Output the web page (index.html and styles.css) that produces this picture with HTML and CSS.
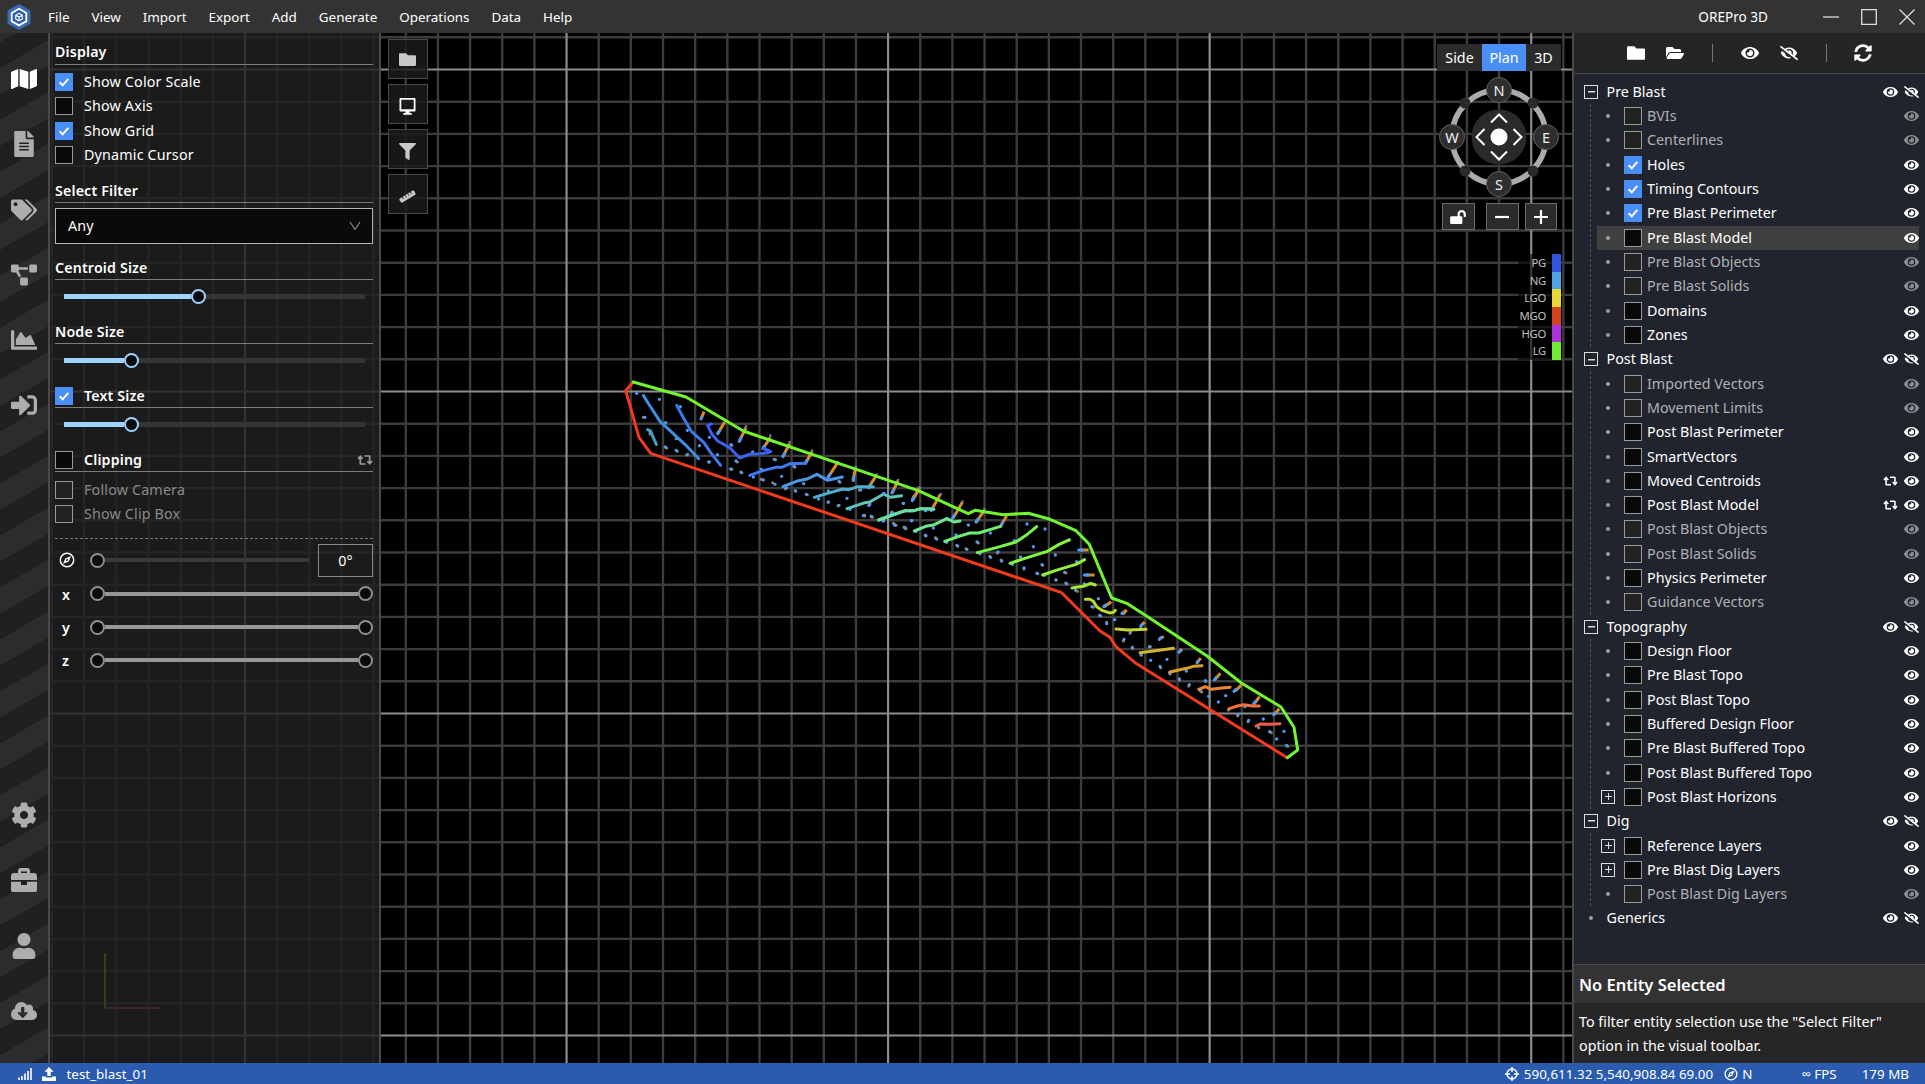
FILE: index.html
```html
<!DOCTYPE html>
<html lang="en">
<head>
<meta charset="utf-8">
<title>OREPro 3D</title>
<link rel="stylesheet" href="styles.css">
</head>
<body>
<svg class="defs" aria-hidden="true">
  <symbol id="eye" viewBox="0 0 576 512"><path d="M572.52 241.4C518.29 135.59 410.93 64 288 64S57.68 135.64 3.48 241.41a32.35 32.35 0 0 0 0 29.19C57.71 376.41 165.07 448 288 448s230.32-71.64 284.52-177.41a32.35 32.35 0 0 0 0-29.19zM288 400a144 144 0 1 1 144-144 143.93 143.93 0 0 1-144 144zm0-240a95.31 95.31 0 0 0-25.31 3.79 47.85 47.85 0 0 1-66.9 66.9A95.78 95.78 0 1 0 288 160z"/></symbol>
  <symbol id="eye-off" viewBox="0 0 640 512"><path d="M320 400c-75.85 0-137.25-58.71-142.9-133.11L72.2 185.82c-13.79 17.3-26.48 35.59-36.72 55.59a32.35 32.35 0 0 0 0 29.19C89.71 376.41 197.07 448 320 448c26.91 0 52.87-4 77.89-10.46L346 397.39a144.13 144.13 0 0 1-26 2.61zm313.82 58.1l-110.55-85.44a331.25 331.25 0 0 0 81.25-102.07 32.35 32.35 0 0 0 0-29.19C550.29 135.59 442.93 64 320 64a308.15 308.15 0 0 0-147.32 37.7L45.46 3.37A16 16 0 0 0 23 6.18L3.37 31.45A16 16 0 0 0 6.18 53.9l588.36 454.73a16 16 0 0 0 22.46-2.81l19.64-25.27a16 16 0 0 0-2.82-22.45zm-183.72-142l-39.3-30.38A94.75 94.75 0 0 0 416 256a94.76 94.76 0 0 0-121.31-92.21A47.65 47.65 0 0 1 304 192a46.64 46.64 0 0 1-1.54 10l-73.61-56.89A142.31 142.31 0 0 1 320 112a143.92 143.92 0 0 1 144 144c0 21.63-5.29 41.79-13.9 60.11z"/></symbol>
  <symbol id="folder" viewBox="0 0 512 512"><path d="M480 128H272l-64-64H32C14 64 0 78 0 96v320c0 18 14 32 32 32h448c18 0 32-14 32-32V160c0-18-14-32-32-32z"/></symbol>
  <symbol id="folder-open" viewBox="0 0 576 512"><path d="M572.694 292.093L500.27 416.248A63.997 63.997 0 0 1 444.989 448H45.025c-18.523 0-30.064-20.093-20.731-36.093l72.424-124.155A64 64 0 0 1 152 256h399.964c18.523 0 30.064 20.093 20.73 36.093zM152 224h328v-48c0-26.51-21.49-48-48-48H272l-64-64H48C21.49 64 0 85.49 0 112v278.046l69.077-118.418C86.214 242.25 117.989 224 152 224z"/></symbol>
  <symbol id="map" viewBox="0 0 576 512"><path d="M0 117.66v346.32c0 11.32 11.43 19.06 21.94 14.86L160 416V32L20.12 87.95A32.006 32.006 0 0 0 0 117.66zM192 416l192 64V96L192 32v384zM554.06 33.16L416 96v384l139.88-55.95A31.996 31.996 0 0 0 576 394.34V48.02c0-11.32-11.43-19.06-21.94-14.86z"/></symbol>
  <symbol id="file" viewBox="0 0 384 512"><path d="M224 136V0H24C10.7 0 0 10.7 0 24v464c0 13.3 10.7 24 24 24h336c13.3 0 24-10.7 24-24V160H248c-13.2 0-24-10.8-24-24zm64 236c0 6.6-5.4 12-12 12H108c-6.6 0-12-5.4-12-12v-8c0-6.6 5.4-12 12-12h168c6.6 0 12 5.4 12 12v8zm0-64c0 6.6-5.4 12-12 12H108c-6.6 0-12-5.4-12-12v-8c0-6.6 5.4-12 12-12h168c6.6 0 12 5.4 12 12v8zm0-72v8c0 6.6-5.4 12-12 12H108c-6.6 0-12-5.4-12-12v-8c0-6.6 5.4-12 12-12h168c6.6 0 12 5.4 12 12zm96-114.1v6.1H256V0h6.1c6.4 0 12.5 2.5 17 7l97.9 98c4.5 4.5 7 10.6 7 16.9z"/></symbol>
  <symbol id="tags" viewBox="0 0 640 512"><path d="M497.941 225.941L286.059 14.059A48 48 0 0 0 252.118 0H48C21.49 0 0 21.49 0 48v204.118a48 48 0 0 0 14.059 33.941l211.882 211.882c18.744 18.745 49.136 18.746 67.882 0l204.118-204.118c18.745-18.745 18.745-49.137 0-67.882zM112 160c-26.51 0-48-21.49-48-48s21.49-48 48-48 48 21.49 48 48-21.49 48-48 48zm513.941 133.823L421.823 497.941c-18.745 18.745-49.137 18.745-67.882 0l-.36-.36L527.64 323.522c16.999-16.999 26.36-39.6 26.36-63.64s-9.362-46.641-26.36-63.64L331.397 0h48.721a48 48 0 0 1 33.941 14.059l211.882 211.882c18.745 18.745 18.745 49.137 0 67.882z"/></symbol>
  <symbol id="diagram" viewBox="0 0 640 512"><path d="M384 320H256c-17.67 0-32 14.33-32 32v128c0 17.67 14.33 32 32 32h128c17.67 0 32-14.33 32-32V352c0-17.67-14.33-32-32-32zM192 32c0-17.67-14.33-32-32-32H32C14.33 0 0 14.33 0 32v128c0 17.67 14.33 32 32 32h95.72l73.16 128.04C211.98 300.98 232.4 288 256 288h.28L192 175.51V128h224V64H192V32zM608 0H480c-17.67 0-32 14.33-32 32v128c0 17.67 14.33 32 32 32h128c17.67 0 32-14.33 32-32V32c0-17.67-14.33-32-32-32z"/></symbol>
  <symbol id="chart" viewBox="0 0 512 512"><path d="M500 384c6.6 0 12 5.4 12 12v40c0 6.6-5.4 12-12 12H12c-6.6 0-12-5.4-12-12V76c0-6.6 5.4-12 12-12h40c6.6 0 12 5.4 12 12v308h436zM372.7 159.5L288 216l-85.3-113.7c-5.1-6.8-15.5-6.3-19.9 1L96 248v104h384l-89.9-187.8c-3.2-6.5-11.4-8.7-17.4-4.7z"/></symbol>
  <symbol id="sign-in" viewBox="0 0 512 512"><path d="M416 448h-84c-6.6 0-12-5.4-12-12v-40c0-6.6 5.4-12 12-12h84c17.7 0 32-14.3 32-32V160c0-17.7-14.3-32-32-32h-84c-6.6 0-12-5.4-12-12V76c0-6.6 5.4-12 12-12h84c53 0 96 43 96 96v192c0 53-43 96-96 96zm-47-201L201 79c-15-15-41-4.5-41 17v96H24c-13.3 0-24 10.7-24 24v96c0 13.3 10.7 24 24 24h136v96c0 21.5 26 32 41 17l168-168c9.3-9.4 9.3-24.6 0-34z"/></symbol>
  <symbol id="cog" viewBox="0 0 512 512"><path d="M487.4 315.7l-42.6-24.6c4.3-23.2 4.3-47 0-70.2l42.6-24.6c4.9-2.8 7.1-8.6 5.5-14-11.1-35.6-30-67.8-54.7-94.6-3.8-4.1-10-5.1-14.8-2.3L380.8 110c-17.9-15.4-38.5-27.3-60.8-35.1V25.8c0-5.6-3.9-10.5-9.4-11.7-36.7-8.2-74.3-7.8-109.2 0-5.5 1.2-9.4 6.1-9.4 11.7V75c-22.2 7.9-42.8 19.8-60.8 35.1L88.7 85.5c-4.9-2.8-11-1.9-14.8 2.3-24.7 26.7-43.6 58.9-54.7 94.6-1.7 5.4.6 11.2 5.5 14L67.3 221c-4.3 23.2-4.3 47 0 70.2l-42.6 24.6c-4.9 2.8-7.1 8.6-5.5 14 11.1 35.6 30 67.8 54.7 94.6 3.8 4.1 10 5.1 14.8 2.3l42.6-24.6c17.9 15.4 38.5 27.3 60.8 35.1v49.2c0 5.6 3.9 10.5 9.4 11.7 36.7 8.2 74.3 7.8 109.2 0 5.5-1.2 9.4-6.1 9.4-11.7v-49.2c22.2-7.9 42.8-19.8 60.8-35.1l42.6 24.6c4.9 2.8 11 1.9 14.8-2.3 24.7-26.7 43.6-58.9 54.7-94.6 1.5-5.5-.7-11.3-5.6-14.1zM256 336c-44.1 0-80-35.9-80-80s35.9-80 80-80 80 35.9 80 80-35.9 80-80 80z"/></symbol>
  <symbol id="toolbox" viewBox="0 0 26 24"><path fill-rule="evenodd" d="M7 5V3a3 3 0 0 1 3-3h6a3 3 0 0 1 3 3v2h4a3 3 0 0 1 3 3v4H0V8a3 3 0 0 1 3-3zm3 0h6V3.5h-6zM0 13.7h10V17h6v-3.300h10V22a2 2 0 0 1-2 2H2a2 2 0 0 1-2-2z"/></symbol>
  <symbol id="user" viewBox="0 0 448 512"><path d="M224 256c70.700 0 128-57.300 128-128S294.700 0 224 0 96 57.300 96 128s57.300 128 128 128zm89.600 32h-16.700c-22.200 10.200-46.900 16-72.900 16s-50.600-5.800-72.900-16h-16.700C60.200 288 0 348.200 0 422.400V464c0 26.500 21.500 48 48 48h352c26.500 0 48-21.500 48-48v-41.600c0-74.200-60.200-134.400-134.400-134.400z"/></symbol>
  <symbol id="cloud" viewBox="0 0 640 512"><path d="M537.6 226.6c4.1-10.7 6.4-22.4 6.4-34.6 0-53-43-96-96-96-19.7 0-38.1 6-53.300 16.200C367 64.200 315.300 32 256 32c-88.400 0-160 71.600-160 160 0 2.700.1 5.400.2 8.100C40.200 219.800 0 273.200 0 336c0 79.500 64.500 144 144 144h368c70.700 0 128-57.300 128-128 0-61.900-44-113.600-102.400-125.400zm-132.900 88.700L299.300 420.700c-6.200 6.200-16.400 6.200-22.600 0L171.300 315.300c-10.100-10.100-2.900-27.300 11.300-27.300H248V176c0-8.800 7.200-16 16-16h48c8.800 0 16 7.200 16 16v112h65.400c14.200 0 21.400 17.200 11.300 27.300z"/></symbol>
  <symbol id="sync" viewBox="0 0 512 512"><path d="M370.72 133.28C339.458 104.008 298.888 87.962 255.848 88c-77.458.068-144.328 53.178-162.791 126.85-1.344 5.363-6.122 9.15-11.651 9.15H24.103c-7.498 0-13.194-6.807-11.807-14.176C33.933 94.924 134.813 8 256 8c66.448 0 126.791 26.136 171.315 68.685L463.03 40.97C478.149 25.851 504 36.559 504 57.941V192c0 13.255-10.745 24-24 24H345.941c-21.382 0-32.09-25.851-16.971-40.971l41.75-41.749zM32 296h134.059c21.382 0 32.09 25.851 16.971 40.971l-41.75 41.75c31.262 29.273 71.835 45.319 114.876 45.28 77.418-.07 144.315-53.144 162.787-126.849 1.344-5.363 6.122-9.15 11.651-9.15h57.304c7.498 0 13.194 6.807 11.807 14.176C478.067 417.076 377.187 504 256 504c-66.448 0-126.791-26.136-171.315-68.685L48.97 471.03C33.851 486.149 8 475.441 8 454.059V320c0-13.255 10.745-24 24-24z"/></symbol>
  <symbol id="filter" viewBox="0 0 512 512"><path d="M487.976 0H24.028C2.71 0-8.047 25.866 7.058 40.971L192 225.941V432c0 7.831 3.821 15.17 10.237 19.662l80 55.98C298.02 518.69 320 507.493 320 487.98V225.941l184.947-184.97C520.021 25.896 509.338 0 487.976 0z"/></symbol>
  <symbol id="unlock" viewBox="0 0 576 512"><path d="M423.5 0C339.5.3 272 69.5 272 153.5V224H48c-26.5 0-48 21.5-48 48v192c0 26.5 21.5 48 48 48h352c26.5 0 48-21.5 48-48V272c0-26.5-21.5-48-48-48h-48v-71.1c0-39.6 31.7-72.5 71.3-72.9 40-.4 72.7 32.1 72.7 72v80c0 13.3 10.7 24 24 24h32c13.3 0 24-10.7 24-24v-80C576 68 507.5-.3 423.5 0z"/></symbol>
  <symbol id="monitor" viewBox="0 0 16 17"><path fill-rule="evenodd" d="M1 0h14a1 1 0 0 1 1 1v11.500a1 1 0 0 1-1 1H1a1 1 0 0 1-1-1V1a1 1 0 0 1 1-1zm.8 1.700v9.500h12.400V1.700zM6 13.500h4v1.500h2.200v1.800H3.800V15H6z"/></symbol>
  <symbol id="ruler" viewBox="0 0 18 14"><path d="M0.500 9.500 14.500.6a1 1 0 0 1 1.400.3l1.600 2.900a1 1 0 0 1-.3 1.300L3.500 13.300a1 1 0 0 1-1.400-.4L.3 10.700z"/><path d="m3.500 7.500 1.300 2.200M6.400 5.700l1.300 2.200M9.200 3.900l1.300 2.200M12 2.100l1.300 2.200" stroke="#191919" stroke-width="1"/></symbol>
  <symbol id="swap" viewBox="0 0 16 10"><path d="M3.300 9.400V2.500M1 3.900 3.300 1.300l2.300 2.600M3.300 9h5.200M12.700.600v6.900M10.400 6.100l2.300 2.600 2.300-2.600M12.700 1H7.500" fill="none" stroke="currentColor" stroke-width="1.700"/></symbol>
  <symbol id="compass" viewBox="0 0 16 16"><circle cx="8" cy="8" r="6.700" fill="none" stroke="currentColor" stroke-width="1.500"/><path fill-rule="evenodd" d="m12 4-2.200 5.600L4 12l2.200-5.600zM8 7a1 1 0 1 0 0 2 1 1 0 0 0 0-2z"/></symbol>
  <symbol id="check" viewBox="0 0 18 18"><path d="m4.700 9.300 3 3 5.600-6.500" fill="none" stroke="#fff" stroke-width="2"/></symbol>
</svg>

<header class="titlebar">
  <svg class="logo" viewBox="0 0 24 26"><path d="M12 0 23.500 6.500v13L12 26 .5 19.500v-13z" fill="#3b69b4"/><path d="M12 4.700 19.300 8.900v8.300L12 21.400l-7.300-4.200V8.900z" fill="#2f5fae" stroke="#fff" stroke-width="1.800"/><path d="M12 9.300 15.300 11.200v3.700L12 16.800l-3.300-1.900v-3.700zM12 13v3.800M12 13l3.300-1.800M12 13l-3.300-1.800" fill="none" stroke="#fff" stroke-width="1.100"/></svg>
  <nav class="menu"><span>File</span><span>View</span><span>Import</span><span>Export</span><span>Add</span><span>Generate</span><span>Operations</span><span>Data</span><span>Help</span></nav>
  <span class="app-name">OREPro 3D</span>
  <svg class="win" viewBox="0 0 16 16"><path d="M0 8h16"/></svg>
  <svg class="win" viewBox="0 0 16 16"><path d="M.7.700h14.600v14.600H.7z"/></svg>
  <svg class="win" viewBox="0 0 16 16"><path d="m.5.500 15 15m0-15-15 15"/></svg>
</header>

<main class="workspace">
  <aside class="rail">
    <div class="rail-group">
      <svg class="on"><use href="#map"/></svg><svg><use href="#file"/></svg><svg><use href="#tags"/></svg><svg><use href="#diagram"/></svg><svg><use href="#chart"/></svg><svg><use href="#sign-in"/></svg>
    </div>
    <div class="rail-group">
      <svg><use href="#cog"/></svg><svg><use href="#toolbox"/></svg><svg><use href="#user"/></svg><svg><use href="#cloud"/></svg>
    </div>
  </aside>

  <section class="viewport">
    <svg class="scene" viewBox="50 33 1522 1030">
      <g id="grid" fill="none"></g>
      <path d="M105 953v55" stroke="#7be03a" stroke-width="2"/><path d="M105 1008h55" stroke="#d8502e" stroke-width="2"/>
      <g fill="none" stroke-linecap="round" stroke-linejoin="round">
        <g transform="translate(610 360) scale(.33333)">
          <path class="tan" d="M100 172h.1M170 264h.1M202 274h.1M230 285h.1M295 306h.1M366 328h.1M382 306h.1M392 336h.1M454 358h.1M488 368h.1M526 386h.1M555 392h.1M592 404h.1M654 427h.1M684 437h.1M764 468h.1M783 468h.1M858 496h.1M888 506h.1M366 256h.1M492 298h.1M555 322h.1M690 367h.1M748 390h.1M780 432h.1M844 460h.1M120 222h.1M198 236h.1"/>
          <path class="tick" d="m282 155-8 20M344 186l-20 34M408 202l-20 42M481 232l-22 34M539 250l-20 40M606 275l-20 36M683 308l-30 46M737 322l-8 40M800 345l-26 40M864 362l-18 38M929 384l-21 36"/>
          <path class="grey" d="M408 199h.1M481 227h.1M539 246h.1M606 272h.1M683 306h.1M737 321h.1M800 344h.1M864 360h.1M929 382h.1"/>
          <path class="tickb" d="m274 173-1 4M328 213l-5 8M392 235l-4 9M463 258l-4 8M524 280l-5 10M590 302l-4 8M659 344l-5 8M731 350l-1 12M780 377l-5 6M850 390l-4 9M911 410l-3 9"/>
          <path class="dot" d="M80 100h.1M148 118h.1M105 172h.1M167 188h.1M211 140h.1M232 211h.1M202 235h.1M166 261h.1M198 271h.1M233 283h.1M268 257h.1M298 232h.1M322 284h.1M298 306h.1M362 327h.1M378 303h.1M395 338h.1M363 254h.1M428 276h.1M430 351h.1M454 328h.1M460 360h.1M495 373h.1M496 299h.1M515 349h.1M529 384h.1M552 319h.1M557 393h.1M581 371h.1M589 403h.1M621 343h.1M626 417h.1M655 393h.1M655 426h.1M687 364h.1M687 436h.1M711 415h.1M720 448h.1M752 390h.1M760 467h.1M777 436h.1M785 470h.1M821 401h.1M820 483h.1M846 458h.1M854 494h.1M880 430h.1M884 503h.1M905 482h.1M947 452h.1M947 526h.1M120 216h.1"/>
          <g class="contour">
            <path stroke="#3d8fe0" d="m100 106 20 32 30 46 52 48 30 28 34 36"/>
            <path stroke="#45a0c0" d="m113 209 9 4 8 20 9 20"/>
            <path stroke="#3c78ee" d="m200 136 24 44 20 34 38 34 20 30 30 38"/>
            <path stroke="#3f5ff2" d="m304 192-11 5 13 26 17 20 36 20 30 31 32-12 28-1 25-3 8-3-20-9"/>
            <path stroke="#4079f0" d="m419 346 40-14 38-10 18 0 25-11 47-1"/>
            <path stroke="#4a98e6" d="m519 380 46-18 26-5 30-14 32 18 44-10"/>
            <path stroke="#50aed0" d="m613 412 50-15 35-10 18 2 28-9 46 0"/>
            <path stroke="#5cc6bc" d="m711 446 54-18 14-2 42-24 20 10 34-5"/>
            <path stroke="#68dda0" d="m806 480 50-18 30-10 26 0 20-6 40 2"/>
          </g>
        </g>
        <g transform="translate(860 440) scale(.33333)">
          <path class="tan" d="M14 226h.1M37 232h.1M100 250h.1M132 261h.1M96 216h.1M198 288h.1M226 293h.1M290 316h.1M318 326h.1M355 309h.1M389 349h.1M423 360h.1M412 339h.1M492 387h.1M530 399h.1M548 376h.1M588 420h.1M618 399h.1M617 429h.1M652 454h.1M700 502h.1M722 528h.1M740 547h.1"/>
          <path class="tick" d="m178 143-20 36M241 163l-26 46M307 187l-28 48M372 212l-24 36M440 228l-16 26M686 330h-24M704 405h-28M754 485l-22 16M799 510l-10 12"/>
          <path class="grey" d="M178 142h.1M242 162h.1M307 185h.1M373 208h.1"/>
          <path class="tickb" d="m161 174-4 8M218 204l-4 8M283 226l-6 10M353 238l-5 8M427 249l-3 7M668 330h-12M685 405h-12M737 495l-6 5M790 516l-4 4"/>
          <path class="dot" d="M72 160h.1M27 196h.1M130 190h.1M11 227h.1M34 230h.1M95 218h.1M70 242h.1M104 255h.1M136 264h.1M155 242h.1M197 211h.1M220 264h.1M261 235h.1M196 286h.1M230 297h.1M168 274h.1M260 307h.1M288 285h.1M325 255h.1M293 318h.1M321 328h.1M351 306h.1M391 279h.1M414 336h.1M360 341h.1M392 352h.1M425 363h.1M463 302h.1M457 373h.1M481 351h.1M501 252h.1M555 267h.1M520 320h.1M492 384h.1M533 401h.1M546 374h.1M553 406h.1M586 345h.1M627 300h.1M588 420h.1M614 397h.1M620 431h.1M650 365h.1M647 451h.1M673 432h.1M715 476h.1M696 500h.1M719 526h.1M740 551h.1M764 539h.1"/>
          <g class="contour">
            <path stroke="#68dda0" d="m56 240 50-18 30-10 26 0 20-6 24 0 14 2"/>
            <path stroke="#6be58e" d="m163 273 34-14 26-5 37-18 22 10 18-3"/>
            <path stroke="#70ef70" d="m254 304 40-14 36-11 26 0 36-11 30-9"/>
            <path stroke="#79f54a" d="m352 338 60-16 56-16 30-20 32-26"/>
            <path stroke="#86f53e" d="m450 370 42-14 70-22 34-20 32-14"/>
            <path stroke="#95ee38" d="m548 405 40-14 60-18 26-14"/>
            <path stroke="#a6e634" d="m636 444 34-5 22-9 14 5"/>
            <path stroke="#b5dc30" d="m676 478 14 0 10 6 10 16 18 12 22 7 10-2 6-6"/>
          </g>
        </g>
        <g transform="translate(1060 560) scale(.33333)">
          <path class="tan" d="M210 220h.1M190 243h.1M218 265h.1M271 260h.1M244 286h.1M302 323h.1M330 342h.1M358 360h.1M386 378h.1M425 396h.1M437 364h.1M505 450h.1M533 467h.1M564 485h.1M596 503h.1M634 518h.1M683 559h.1"/>
          <path class="tick" d="M200 150l-12 12M254 186l-12 12M311 229l-8 6M366 267l-6 8M422 294l-10 14M481 340l-17 20M544 375l-18 18M599 410l-17 22M658 446l-16 18"/>
          <path class="tickb" d="m246 194-4 6M303 233l-5 5M361 271l-4 6M414 303l-3 5M468 353l-5 7M528 388l-6 6M586 425l-5 6M645 459l-4 5"/>
          <path class="dot" d="M187 160h.1M211 216h.1M192 238h.1M217 262h.1M268 260h.1M243 284h.1M272 301h.1M321 298h.1M300 319h.1M329 339h.1M358 357h.1M379 333h.1M388 374h.1M421 392h.1M436 362h.1M446 409h.1M475 426h.1M497 407h.1M507 447h.1M534 464h.1M555 440h.1M566 481h.1M610 477h.1M594 499h.1M629 515h.1M650 537h.1M672 514h.1M680 556h.1"/>
          <g class="contour">
            <path stroke="#c2d22e" d="m168 207 36 3 54-2"/>
            <path stroke="#d0b62c" d="m240 278 46-6 54-7"/>
            <path stroke="#dba02c" d="m330 336 50-11 20-6 26-2"/>
            <path stroke="#ee8530" d="m416 388 20-8 18 8 32-4 24-2"/>
            <path stroke="#f0703a" d="m508 446 24-8 20-4 26 4 20 0"/>
            <path stroke="#ee5a4c" d="m588 498 12-6 30 1 30-2"/>
          </g>
        </g>
        <path stroke="#f23a1c" stroke-width="3" d="m633.300 382-7.600 8.700 13.300 46.600 11.700 16L1061.700 592.700 1100 631l10 6.300 6 9.400 19 16 152.300 95"/>
        <path stroke="#72f52f" stroke-width="3" d="M633.300 382 686 397l57.300 34L860 470.700l58.300 20 50 23 6.700-3.400 28.300 4.400 25-1.400 21.700 6 26 11.400 13.300 13.600 22.400 53.700 15 5.300 18.300 11.700 61.700 40.700 35 27.600 39.300 23.700 13 20.300 3.700 22.700-10.400 7.700"/>
      </g>
    </svg>

    <div class="panel">
      <h2 class="first">Display</h2>
      <div class="checks">
        <label><i class="box on"><svg><use href="#check"/></svg></i>Show Color Scale</label>
        <label><i class="box"></i>Show Axis</label>
        <label><i class="box on"><svg><use href="#check"/></svg></i>Show Grid</label>
        <label><i class="box"></i>Dynamic Cursor</label>
      </div>
      <h2>Select Filter</h2>
      <div class="select">Any<svg viewBox="0 0 12 10"><path d="m1 1 5 7.500L11 1" fill="none" stroke="#8a8a8a" stroke-width="1.200"/></svg></div>
      <h2>Centroid Size</h2>
      <div class="slider"><b class="fill f1"></b><b class="knob"></b></div>
      <h2 class="tight">Node Size</h2>
      <div class="slider"><b class="fill f2"></b><b class="knob"></b></div>
      <h2 class="tight"><i class="box on"><svg><use href="#check"/></svg></i>Text Size</h2>
      <div class="slider"><b class="fill f2"></b><b class="knob"></b></div>
      <h2 class="tight"><i class="box"></i>Clipping<svg class="swap"><use href="#swap"/></svg></h2>
      <div class="checks off">
        <label><i class="box"></i>Follow Camera</label>
        <label><i class="box"></i>Show Clip Box</label>
      </div>
      <div class="ranges">
        <div class="range"><svg class="cmp"><use href="#compass"/></svg><b class="knob"></b><b class="line thin"></b><span class="deg">0°</span></div>
        <div class="range"><em>x</em><b class="knob"></b><b class="line"></b><b class="knob"></b></div>
        <div class="range"><em>y</em><b class="knob"></b><b class="line"></b><b class="knob"></b></div>
        <div class="range"><em>z</em><b class="knob"></b><b class="line"></b><b class="knob"></b></div>
      </div>
    </div>

    <div class="tools">
      <span><svg><use href="#folder"/></svg></span><span class="on"><svg><use href="#monitor"/></svg></span><span><svg><use href="#filter"/></svg></span><span><svg><use href="#ruler"/></svg></span>
    </div>

    <div class="nav">
      <div class="views"><span>Side</span><span class="on">Plan</span><span>3D</span></div>
      <svg class="dial" viewBox="-60 -60 120 120">
        <circle r="47" fill="none" stroke="#ababab" stroke-width="5.500"/>
        <g fill="#2a2a2a"><circle cx="-34" cy="-34" r="5.500"/><circle cx="34" cy="-34" r="5.500"/><circle cx="-34" cy="34" r="5.500"/><circle cx="34" cy="34" r="5.500"/><circle r="27.500"/></g>
        <g fill="#2e2e2e" stroke="#606060"><circle cy="-47" r="12.500"/><circle cy="47" r="12.500"/><circle cx="-47" r="12.500"/><circle cx="47" r="12.500"/></g>
        <circle r="8.500" fill="#fff"/>
        <path d="m-8-14.500 8-8 8 8M-8 14.500l8 8 8-8M-14.500-8l-8 8 8 8M14.500-8l8 8-8 8" fill="none" stroke="#fff" stroke-width="2"/>
        <g fill="#eee" text-anchor="middle" font-size="14.500"><text y="-41.500">N</text><text y="52.500">S</text><text x="-47" y="5.500">W</text><text x="47" y="5.500">E</text></g>
      </svg>
      <div class="zoom">
        <span><svg class="lock"><use href="#unlock"/></svg></span>
        <span><svg viewBox="0 0 14 14"><path d="M0 7h14" stroke="#fff" stroke-width="2.200"/></svg></span>
        <span><svg viewBox="0 0 14 14"><path d="M0 7h14M7 0v14" stroke="#fff" stroke-width="2.200"/></svg></span>
      </div>
      <ul class="legend"><li class="pg">PG</li><li class="ng">NG</li><li class="lgo">LGO</li><li class="mgo">MGO</li><li class="hgo">HGO</li><li class="lg">LG</li></ul>
    </div>
  </section>

  <aside class="side">
    <div class="side-tools"><svg><use href="#folder"/></svg><svg><use href="#folder-open"/></svg><hr><svg><use href="#eye"/></svg><svg><use href="#eye-off"/></svg><hr><svg><use href="#sync"/></svg></div>
    <div class="tree" id="tree"></div>
    <h3>No Entity Selected</h3>
    <p>To filter entity selection use the "Select Filter"<br>option in the visual toolbar.</p>
  </aside>
</main>

<footer class="status">
  <svg class="bars" viewBox="0 0 14 12"><path d="M1 12V9.500M4 12V8M7 12V5.500M10 12V3M13 12V0" stroke="#fff" stroke-width="1.600"/></svg>
  <svg class="up" viewBox="0 0 14 14"><path fill="#fff" d="M7 0l4.500 4.800H8.700V9H5.300V4.800H2.500zM0 9.500h4v1h6v-1h4V14H0z"/></svg>
  <span class="project">test_blast_01</span>
  <svg class="cross" viewBox="0 0 14 14"><circle cx="7" cy="7" r="5" fill="none" stroke="#fff" stroke-width="1.400"/><path d="M7 0v5M7 9v5M0 7h5M9 7h5" stroke="#fff" stroke-width="1.400"/></svg>
  <span class="coords">590,611.32 5,540,908.84 69.00</span>
  <svg class="cmp"><use href="#compass"/></svg>
  <span class="north">N</span>
  <span class="fps">∞ FPS</span>
  <span class="mem">179 MB</span>
</footer>
<script src="app.js"></script>
</body>
</html>
```
FILE: app.js
```js
// Viewport grid: minor lines every cell, a major line every tenth cell.
const CELL_X = 32.155, CELL_Y = 32.2;
let minor = '', major = '';
for (let i = -6; i <= 41; i++) {
  const seg = `M${(245 + i * CELL_X).toFixed(2)} 33V1063`;
  if (i % 10 === 0) major += seg; else minor += seg;
}
for (let i = -1; i <= 31; i++) {
  const seg = `M50 ${(69.5 + i * CELL_Y).toFixed(2)}H1572`;
  if (i % 10 === 0) major += seg; else minor += seg;
}
document.getElementById('grid').innerHTML =
  `<path class="minor" d="${minor}"/><path class="major" d="${major}"/>`;

// Layer tree. Flags: c checked, d disabled, h highlighted, s swap icon, p expandable.
const layers = [
  ['Pre Blast', ['BVIs|d', 'Centerlines|d', 'Holes|c', 'Timing Contours|c', 'Pre Blast Perimeter|c', 'Pre Blast Model|h', 'Pre Blast Objects|d', 'Pre Blast Solids|d', 'Domains|', 'Zones|']],
  ['Post Blast', ['Imported Vectors|d', 'Movement Limits|d', 'Post Blast Perimeter|', 'SmartVectors|', 'Moved Centroids|s', 'Post Blast Model|s', 'Post Blast Objects|d', 'Post Blast Solids|d', 'Physics Perimeter|', 'Guidance Vectors|d']],
  ['Topography', ['Design Floor|', 'Pre Blast Topo|', 'Post Blast Topo|', 'Buffered Design Floor|', 'Pre Blast Buffered Topo|', 'Post Blast Buffered Topo|', 'Post Blast Horizons|p']],
  ['Dig', ['Reference Layers|p', 'Pre Blast Dig Layers|p', 'Post Blast Dig Layers|d']],
  ['Generics', []]
];
const icon = (id) => `<svg class="ic"><use href="#${id}"/></svg>`;
const leaf = (entry) => {
  const [name, f] = entry.split('|');
  const mark = f.includes('p') ? '<i class="exp plus"></i>' : '<i class="bullet"></i>';
  const box = f.includes('c') ? `<i class="box on"><svg><use href="#check"/></svg></i>` : '<i class="box"></i>';
  return `<div class="row leaf${f.includes('d') ? ' dim' : ''}${f.includes('h') ? ' hot' : ''}">${mark}${box}<span>${name}</span>${f.includes('s') ? icon('swap') : ''}${icon('eye')}</div>`;
};
document.getElementById('tree').innerHTML = layers.map(([name, kids]) =>
  `<div class="row">${kids.length ? '<i class="exp"></i>' : '<i class="bullet"></i>'}<span>${name}</span>${icon('eye')}${icon('eye-off')}</div>` +
  (kids.length ? `<div class="kids">${kids.map(leaf).join('')}</div>` : '')).join('');
```
FILE: styles.css
```css
* { box-sizing: border-box; }
body {
  margin: 0; width: 1925px; height: 1084px; overflow: hidden;
  display: flex; flex-direction: column;
  background: #000; color: #fff;
  font: 14.3px/24px "Noto Sans", "Open Sans", sans-serif;
}
svg { fill: currentColor; display: block; flex: none; }
i, em { font-style: normal; }
.defs { display: none; }

/* title bar */
.titlebar { height: 33px; background: #333; display: flex; align-items: center; padding: 0 10px 0 7px; }
.logo { width: 24px; height: 26px; }
.menu { display: flex; gap: 21.900px; margin-left: 17px; flex: 1; font-size: 13.450px; }
.app-name { margin-right: 55px; font-size: 13.600px; }
.win { width: 16px; height: 16px; margin-left: 22px; fill: none; stroke: #ddd; stroke-width: 1.300; }
.app-name + .win { margin-left: 0; }

.workspace { flex: 1; display: flex; min-height: 0; }

/* icon rail */
.rail {
  width: 50px; border-right: 2px solid #4a4a4a; color: #adadad;
  display: flex; flex-direction: column; justify-content: space-between; align-items: center;
  padding: 13px 0 39px;
  background: repeating-linear-gradient(150deg, #2c2c2c 0 7.800px, #202020 7.800px 30.300px, #2c2c2c 30.300px 45px);
}
.rail-group { display: flex; flex-direction: column; gap: 39.300px; }
.rail-group svg { width: 26px; height: 26px; }
.rail-group .on { color: #fff; }
.rail-group:first-child { padding-top: 20px; }

/* viewport */
.viewport { flex: 1; position: relative; display: flex; align-items: flex-start; min-width: 0; }
.scene { position: absolute; left: 0; top: 0; width: 1522px; height: 1030px; }
.minor { stroke: #3c3c3c; stroke-width: 2.400; }
.major { stroke: #8c8c8c; stroke-width: 2.200; }
.contour { stroke-width: 9; }
.dot { stroke: #4f97f5; stroke-width: 10; }
.tan { stroke: #a8814a; stroke-width: 9; }
.grey { stroke: #6d7c94; stroke-width: 8; }
.tick { stroke: #d98b26; stroke-width: 9; stroke-linecap: butt; }
.tickb { stroke: #4f97f5; stroke-width: 9; }

.panel {
  position: relative; width: 331px; height: 100%; padding: 5px 6px 0 5px;
  background: rgba(32, 32, 32, .83); border-right: 2px solid #4a4a4a; letter-spacing: .17px;
}
.panel h2 {
  margin: 10px 0 0; height: 26.500px; padding-top: 2px; border-bottom: 1px solid #7c7c7c;
  display: flex; align-items: center; font-size: 14.200px; font-weight: 600;
}
.panel h2.first { margin: 0; }
.panel h2.tight { margin-top: 5.500px; height: 26.500px; }
.panel .swap { width: 16px; height: 10px; margin-left: auto; color: #999; }
.panel .box { margin-right: 11px; }
.checks { padding-top: 5.300px; }
.checks label { display: flex; align-items: center; height: 24.300px; }
.checks.off { color: #8a8a8a; padding: 5.500px 0 11px; border-bottom: 1px dashed #777; }
.box { width: 18px; height: 18px; flex: none; background: #0a0a0a; border: 1.500px solid #9a9a9a; }
.box.on { background: #4a8ff8; border: 0; }
.box.on svg { width: 18px; height: 18px; }
.off .box, .dim .box { background: #222; }
.select {
  margin-top: 4.500px; height: 36px; padding: 0 11px 0 12px; background: #0a0a0a; border: 1px solid #b4b4b4;
  display: flex; align-items: center; justify-content: space-between;
}
.select svg { width: 12px; height: 10px; }
.slider { height: 32px; margin: 0 8px 0 9px; display: flex; align-items: center; background: linear-gradient(#353535, #353535) center / 100% 5px no-repeat; }
.fill { height: 5px; background: #9fd3fd; }
.f1 { width: 126.500px; }
.f2 { width: 59.500px; }
.knob { width: 15px; height: 15px; flex: none; border: 2px solid #9fd3fd; border-radius: 50%; background: #0a0a0a; }
.ranges { padding-top: 5px; }
.range { height: 33.400px; display: flex; align-items: center; }
.range em { width: 34.500px; padding: 2px 0 0 7px; font-weight: 600; }
.range .cmp { width: 16px; height: 16px; margin: 0 15px 0 3.500px; }
.range .knob { border-color: #8f8f8f; }
.line { flex: 1; height: 4px; background: #979797; }
.line.thin { background: #3a3a3a; }
.deg { width: 55px; height: 33.400px; margin-left: 9px; border: 1px solid #8a8a8a; text-align: center; line-height: 32px; }

.tools { position: relative; padding: 6px 0 0 7px; display: flex; flex-direction: column; gap: 5.500px; color: #c8c8c8; }
.tools span { width: 40px; height: 39.500px; padding: 5px 1px 0 0; border: 1px solid #484848; background: rgba(27, 27, 27, .85); display: flex; align-items: center; justify-content: center; }
.tools span:first-child { padding-top: 1px; }
.tools svg { width: 17px; height: 17px; }
.tools .on { color: #fff; }

.nav { position: relative; margin-left: auto; width: 146px; display: flex; flex-direction: column; align-items: flex-end; padding: 11px 11px 0 0; }
.views { display: flex; line-height: 27px; text-align: center; }
.views span { width: 45px; background: #2b2b2b; }
.views .on { width: 44px; background: #4a8ff8; }
.views span:last-child { width: 35px; }
.dial { width: 120px; height: 120px; margin: 6px 2px 0 0; }
.zoom { display: flex; margin: 6px 4.500px 0 0; }
.zoom span { width: 32px; height: 27px; margin-left: 6px; background: #2b2b2b; border: 1px solid #6c6c6c; display: flex; align-items: center; justify-content: center; }
.zoom span:nth-child(2) { width: 33px; margin-left: 11px; }
.zoom span:first-child { width: 33px; margin-left: 0; }
.zoom svg { width: 14px; height: 14px; }
.zoom .lock { width: 16px; }
.legend { margin: 24px 0 0; padding: 0; list-style: none; width: 43px; background: rgba(0, 0, 0, .6); color: #c0c0c0; font-size: 11.300px; line-height: 17.700px; letter-spacing: -.3px; }
.legend li { border-right: 9px solid; height: 17.700px; padding-right: 6px; display: flex; justify-content: flex-end; }
.pg { border-color: #2f55dc !important; }
.ng { border-color: #50a2e2 !important; }
.lgo { border-color: #e8d83a !important; }
.mgo { border-color: #d2421e !important; }
.hgo { border-color: #ab32dc !important; }
.lg { border-color: #70ea35 !important; }

/* right panel */
.side { width: 353px; border-left: 2px solid #4a4a4a; background: #21242d; display: flex; flex-direction: column; }
.side-tools { height: 41px; background: #252525; border-bottom: 1px solid #484848; display: flex; align-items: center; padding-left: 53px; }
.side-tools svg { width: 18px; height: 18px; margin-right: 21px; }
.side-tools hr { width: 1px; height: 18px; margin: 0 27.500px 0 7px; border: 0; background: #777; }
.tree { padding: 5.700px 6px 0 10px; flex: 1; }
.row { display: flex; align-items: center; height: 24.320px; }
.row span { flex: 1; }
.ic { width: 15px; height: 14px; margin-left: 6px; }
.exp { width: 14px; height: 14px; margin-right: 8.500px; border: 1.500px solid #ddd; background: linear-gradient(#ddd, #ddd) center / 7px 1.500px no-repeat; flex: none; }
.exp.plus { margin: 0 9px 0 4px; background: linear-gradient(#ddd, #ddd) center / 7px 1px no-repeat, linear-gradient(#ddd, #ddd) center / 1px 7px no-repeat; }
.bullet { width: 4px; height: 4px; border-radius: 50%; background: #a0a0a0; margin: 0 14px 0 4.500px; flex: none; }
.kids { margin-left: 6px; border-left: 1px dashed #50535a; padding-left: 6px; }
.leaf .bullet { margin: 0 14px 0 9px; }
.leaf .box { margin-right: 5px; }
.dim span { color: #b0b1b4; }
.dim .ic { color: #8c8d91; }
.hot { background: #404040; }
.side h3 { margin: 0; height: 39px; padding-left: 5px; border-top: 1px solid #484848; background: #333; font-size: 16.500px; font-weight: 600; line-height: 39px; }
.side p { margin: 0; height: 60px; padding: 7px 0 0 5px; background: #262626; }

/* status bar */
.status { height: 21px; background: #2a5bae; display: flex; align-items: center; padding: 0 16px 0 17.500px; font-size: 13.400px; }
.bars { width: 14px; height: 12px; }
.up { width: 14px; height: 14px; margin: 0 11px 0 10px; }
.project { flex: 1; }
.cross { width: 14px; height: 14px; margin-right: 5px; }
.status .cmp { width: 14px; height: 14px; margin: 0 4px 0 11px; }
.fps { margin-left: 49px; }
.mem { margin-left: 25px; }
```
